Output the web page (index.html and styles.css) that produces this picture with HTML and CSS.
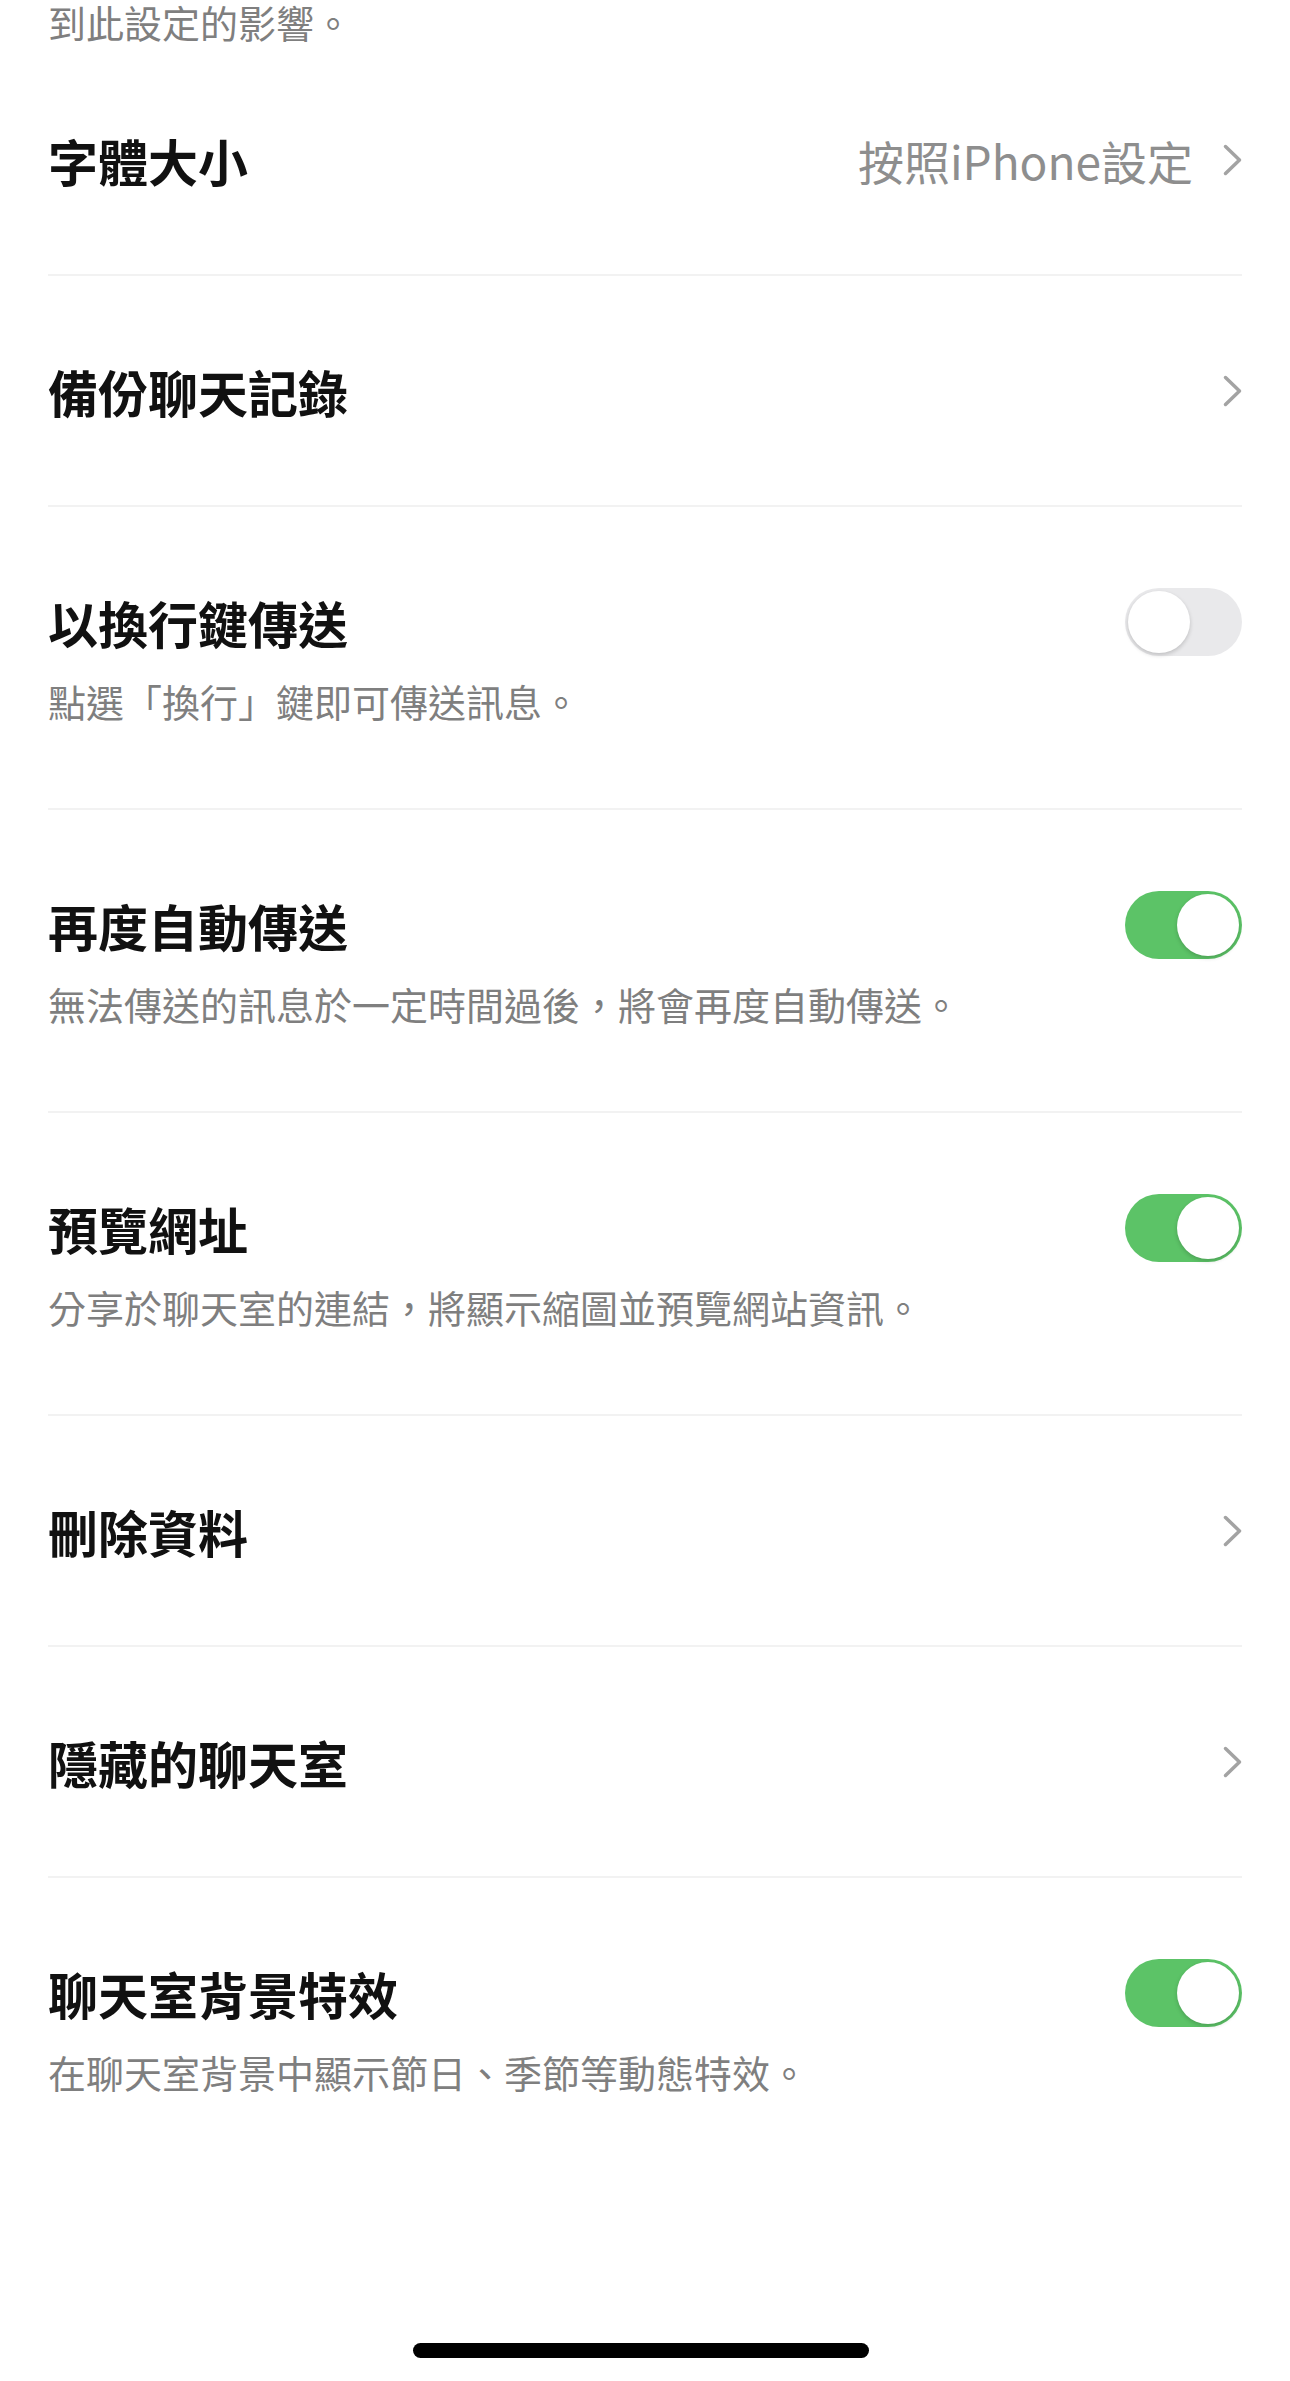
FILE: index.html
```html
<!DOCTYPE html>
<html lang="zh-Hant">

<head>
    <meta charset="UTF-8">
    <meta name="viewport" content="width=device-width, initial-scale=1.0">
    <title>聊天設定</title>
    <link rel="stylesheet" href="styles.css">
</head>

<body>
    <div class="screen">
        <!-- 上一項的說明尾段 -->
        <div class="lead">到此設定的影響。</div>

        <div class="row">
            <div class="row-main">
                <span class="row-title">字體大小</span>
                <span class="row-value">按照iPhone設定</span>
                <svg class="chevron" viewBox="0 0 19 32"><polyline points="2.5,2.5 16.5,16 2.5,29.5" /></svg>
            </div>
        </div>

        <div class="row">
            <div class="row-main">
                <span class="row-title">備份聊天記錄</span>
                <svg class="chevron" viewBox="0 0 19 32"><polyline points="2.5,2.5 16.5,16 2.5,29.5" /></svg>
            </div>
        </div>

        <div class="row">
            <div class="row-main">
                <span class="row-title">以換行鍵傳送</span>
                <span class="toggle"></span>
            </div>
            <div class="row-desc">點選「換行」鍵即可傳送訊息。</div>
        </div>

        <div class="row">
            <div class="row-main">
                <span class="row-title">再度自動傳送</span>
                <span class="toggle on"></span>
            </div>
            <div class="row-desc">無法傳送的訊息於一定時間過後，將會再度自動傳送。</div>
        </div>

        <div class="row">
            <div class="row-main">
                <span class="row-title">預覽網址</span>
                <span class="toggle on"></span>
            </div>
            <div class="row-desc">分享於聊天室的連結，將顯示縮圖並預覽網站資訊。</div>
        </div>

        <div class="row">
            <div class="row-main">
                <span class="row-title">刪除資料</span>
                <svg class="chevron" viewBox="0 0 19 32"><polyline points="2.5,2.5 16.5,16 2.5,29.5" /></svg>
            </div>
        </div>

        <div class="row">
            <div class="row-main">
                <span class="row-title">隱藏的聊天室</span>
                <svg class="chevron" viewBox="0 0 19 32"><polyline points="2.5,2.5 16.5,16 2.5,29.5" /></svg>
            </div>
        </div>

        <div class="row row-last">
            <div class="row-main">
                <span class="row-title">聊天室背景特效</span>
                <span class="toggle on"></span>
            </div>
            <div class="row-desc">在聊天室背景中顯示節日、季節等動態特效。</div>
        </div>

        <div class="home-indicator"></div>
    </div>
</body>

</html>
```

FILE: styles.css
```css
body {
    margin: 0;
    padding: 0;
    background-color: #fff;
    font-family: "Noto Sans CJK TC", "Noto Sans", sans-serif;
    color: #111;
}

.screen {
    position: relative;
    height: 100vh;
    padding: 0 48px;
    overflow: hidden;
}

/* 說明文字 */
.lead,
.row-desc {
    font-size: 38px;
    color: #7f7f7f;
}

.lead {
    height: 45px;
    line-height: 44px;
}

.row {
    padding: 84px 0 83px;
    border-bottom: 2px solid #f2f2f2;
}

.row-last {
    border-bottom: none;
}

.row-main {
    display: flex;
    align-items: center;
    height: 62px;
}

.row-title {
    flex: 1;
    font-size: 50px;
    font-weight: bold;
    line-height: 62px;
}

.row-value {
    font-size: 46px;
    color: #8e8e8e;
    margin-right: 30px;
}

.chevron {
    width: 19px;
    height: 32px;
    fill: none;
    stroke: #a3a3a3;
    stroke-width: 3.5;
    stroke-linecap: round;
    stroke-linejoin: round;
}

.row-desc {
    margin-top: 24px;
    line-height: 48px;
}

/* 開關 */
.toggle {
    position: relative;
    width: 117px;
    height: 68px;
    border-radius: 34px;
    background-color: #e9e9eb;
}

.toggle::after {
    content: "";
    position: absolute;
    top: 3px;
    left: 3px;
    width: 62px;
    height: 62px;
    border-radius: 50%;
    background-color: #fff;
    box-shadow: 0 2px 4px rgba(0, 0, 0, 0.18);
}

.toggle.on {
    background-color: #5cc367;
}

.toggle.on::after {
    left: 52px;
}

.home-indicator {
    position: absolute;
    left: 413px;
    bottom: 23px;
    width: 456px;
    height: 15px;
    border-radius: 8px;
    background-color: #000;
}
```
